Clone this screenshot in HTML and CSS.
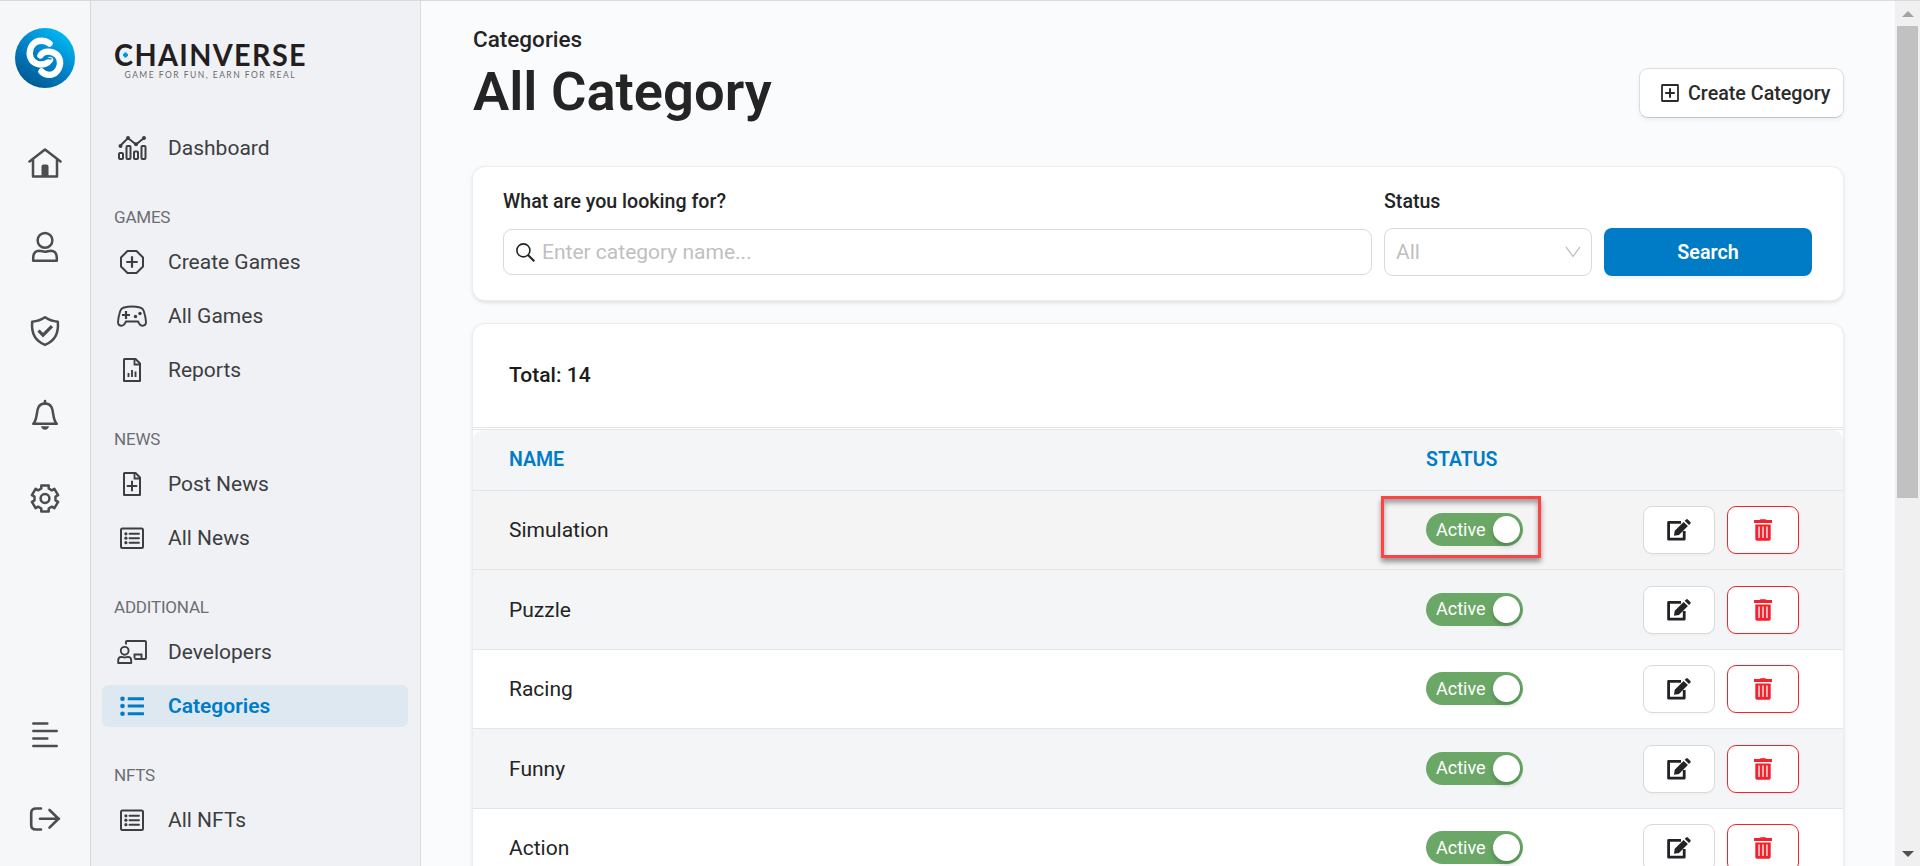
FILE: index.html
```html
<!DOCTYPE html>
<html lang="en">
<head>
<meta charset="utf-8">
<title>All Category</title>
<link rel="stylesheet" href="styles.css">
</head>
<body>
<svg class="sprite" aria-hidden="true">
  <symbol id="i-edit" viewBox="0 0 24 22"><path d="M14 3.4H1.6V20.2H17.2V12" fill="none" stroke="currentColor" stroke-width="2.8" stroke-linejoin="round"/><path d="M7 16.8l.7-5L16.6 2.900l4.300 4.200-8.900 8.900zM17.700 1.800L19.200.400q.800-.700 1.600 0l2.600 2.500q.700.800 0 1.600L22 6z" fill="currentColor"/></symbol>
  <symbol id="i-trash" viewBox="0 0 18 22"><path d="M5.500 1Q6 .2 7 .2h4q1 0 1.500.8H18v3H0V1zM1.300 5.500h15.400V20q0 1.700-1.700 1.700H3Q1.300 21.700 1.300 20zM4.400 7.500v11.500h1.300V7.500zM8.350 7.500v11.500h1.300V7.500zM12.300 7.500v11.500h1.300V7.500z" fill="currentColor" fill-rule="evenodd"/></symbol>
  <symbol id="i-list" viewBox="0 0 30 24"><rect x="4" y="2.500" width="22" height="19.500" rx="1.500" fill="none" stroke="currentColor" stroke-width="2"/><path d="M12.500 7.800h9.500M12.500 12.200h9.500M12.500 16.700h9.500" stroke="currentColor" stroke-width="1.900" stroke-linecap="round"/><g fill="currentColor"><circle cx="8.900" cy="7.800" r="1.600"/><circle cx="8.900" cy="12.200" r="1.600"/><circle cx="8.900" cy="16.700" r="1.600"/></g></symbol>
</svg>
<div class="app">
  <nav class="rail">
    <svg class="rail-logo" viewBox="0 0 60 60">
      <defs><linearGradient id="lg" x1=".85" y1=".1" x2=".25" y2=".95"><stop offset="0" stop-color="#00baf2"/><stop offset=".5" stop-color="#0083c9"/><stop offset="1" stop-color="#005a94"/></linearGradient></defs>
      <circle cx="30" cy="30" r="30" fill="url(#lg)"/>
      <g fill="none" stroke="#fff" stroke-width="6.400" stroke-linecap="round"><path d="M34.500 15.500C28 10.500 19 12.500 16 19.500C13 26.500 15.500 34 22.500 36C27.500 37.500 33 35.500 35 32"/><path d="M25.500 27.500C27.500 24 33 22.500 38 24.500C44.500 27 47 34 43.500 41C40 47.500 32 49 26.500 43.500"/></g>
      <path d="M27.500 32.500C30 31 32 29.500 36.500 31" fill="none" stroke="#0083c9" stroke-width="1.600"/>
    </svg>
    <div class="rail-menu">
      <svg class="rail-icon" viewBox="0 0 34 34"><path d="M1.500 15.500L17 3.500l15.500 12M5 13.500V30.500H29V13.500" fill="none" stroke="currentColor" stroke-width="2.500" stroke-linecap="round" stroke-linejoin="round"/><path d="M13.500 31V20.500q0-2 2-2h3q2 0 2 2V31z" fill="currentColor"/></svg>
      <svg class="rail-icon" viewBox="0 0 34 34"><g fill="none" stroke="currentColor" stroke-width="2.500"><circle cx="17" cy="10.300" r="7.400"/><path d="M5.200 30.700V28q0-7 6-7.200c3 0 3 .9 5.800.9s3-.9 5.800-.9q6 .2 6 7.200v2.700z" stroke-linejoin="round"/></g></svg>
      <svg class="rail-icon" viewBox="0 0 34 34"><path d="M17 3.300c4 2.800 8 4 12.800 4.400C30.800 18 27 27 17 30.900C7 27 3.200 18 4.200 7.700C9 7.300 13 6.100 17 3.300z" fill="none" stroke="currentColor" stroke-width="2.500" stroke-linejoin="round"/><path d="M10.500 16.500l4.500 4.700 9-9" fill="none" stroke="currentColor" stroke-width="3.200"/></svg>
      <svg class="rail-icon" viewBox="0 0 34 34"><path d="M5.200 25.800C11.500 20 5.500 6 17 5.500C28.500 6 22.500 20 28.800 25.800z" fill="none" stroke="currentColor" stroke-width="2.500" stroke-linejoin="round"/><path d="M17 5V3" stroke="currentColor" stroke-width="2.600" stroke-linecap="round"/><path d="M13 28.200h8q-.8 3.300-4 3.600-3.200-.3-4-3.600z" fill="currentColor"/></svg>
      <svg class="rail-icon" viewBox="0 0 34 34"><g transform="translate(17 16.500)" fill="none" stroke="currentColor" stroke-width="2.500" stroke-linejoin="round"><path d="M-3.700-10V-13H3.700V-10L6.800-8.200 9.400-9.700 13.100-3.300 10.500-1.800V1.800L13.100 3.300 9.400 9.700 6.800 8.200 3.700 10V13H-3.700V10L-6.800 8.200-9.400 9.700-13.100 3.300-10.500 1.800V-1.800L-13.100-3.300-9.400-9.700-6.800-8.200z"/><circle r="4.400"/></g></svg>
    </div>
    <div class="rail-menu rail-bottom">
      <svg class="rail-icon" viewBox="0 0 34 34"><path d="M5.300 5.500h14M5.300 13h23.400M5.300 20.500h14M5.300 28h23.400" stroke="currentColor" stroke-width="2.500" stroke-linecap="round"/></svg>
      <svg class="rail-icon" viewBox="0 0 34 34"><path d="M13 6.500H8Q3.200 6.500 3.200 11v12q0 4.500 4.800 4.500h5M12 16.800H31M21.500 8l9 8.800-9 8.800" fill="none" stroke="currentColor" stroke-width="2.600" stroke-linecap="round" stroke-linejoin="round"/></svg>
    </div>
  </nav>

  <aside class="sidebar">
    <svg class="wordmark" viewBox="0 0 194 38">
      <text class="brand" x="0" y="24" textLength="193" lengthAdjust="spacingAndGlyphs">CHAINVERSE</text>
      <path d="M11.500 10.500v5M9 13h5" stroke="#0095dc" stroke-width="2.600"/>
      <text class="tagline" x="10.500" y="36" textLength="170">GAME FOR FUN, EARN FOR REAL</text>
    </svg>
    <div class="groups">
      <div class="group">
        <a class="item"><svg class="icon" viewBox="0 0 30 24"><g fill="none" stroke="currentColor" stroke-width="2"><rect x="2" y="17" width="4" height="6" rx="1"/><rect x="9.500" y="10" width="4" height="13" rx="1"/><rect x="17" y="15.500" width="4" height="7.500" rx="1"/><rect x="24.500" y="10" width="4" height="13" rx="1"/><path d="M3.500 9.500L11 2l8 6.500L27 2"/></g><g fill="currentColor"><circle cx="3.500" cy="10" r="2"/><circle cx="11" cy="2" r="2"/><circle cx="19" cy="8.200" r="2"/><circle cx="27" cy="2" r="2"/></g></svg><span>Dashboard</span></a>
      </div>
      <div class="group">
        <h2 class="label">GAMES</h2>
        <a class="item"><svg class="icon" viewBox="0 0 30 24"><path d="M10.500 1h9L26 7.500v9L19.500 23h-9L4 16.500v-9z" fill="none" stroke="currentColor" stroke-width="2" stroke-linejoin="round"/><path d="M15 6.300v11.400M9.300 12h11.400" stroke="currentColor" stroke-width="2.200"/></svg><span>Create Games</span></a>
        <a class="item"><svg class="icon" viewBox="0 0 30 24"><path d="M7 3.500Q15 1.500 23 3.500q3 .8 3.800 3.500 2 6.500 2.200 11 0 3.700-3.500 3.700-2 0-3-1.700l-1.500-2.500H9L7.500 20q-1 1.700-3 1.700Q1 21.700 1 18 1.200 13.500 3.200 7 4 4.300 7 3.500z" fill="none" stroke="currentColor" stroke-width="1.900"/><path d="M9 7v8M5 11h8" stroke="currentColor" stroke-width="2.200"/><circle cx="23" cy="9.500" r="1.700" fill="currentColor"/><circle cx="18.500" cy="12.500" r="1.700" fill="currentColor"/></svg><span>All Games</span></a>
        <a class="item"><svg class="icon" viewBox="0 0 30 24"><path d="M7 1.500q0-.5.500-.5H18.500L23 5.500V23H7z" fill="none" stroke="currentColor" stroke-width="2" stroke-linejoin="round"/><path d="M17.500 1v5.500H23" fill="none" stroke="currentColor" stroke-width="1.800"/><path d="M11.500 19v-4M15 19v-7M18.500 19v-5.500" stroke="currentColor" stroke-width="1.900"/></svg><span>Reports</span></a>
      </div>
      <div class="group">
        <h2 class="label">NEWS</h2>
        <a class="item"><svg class="icon" viewBox="0 0 30 24"><path d="M7 1.500q0-.5.500-.5H18.500L23 5.500V23H7z" fill="none" stroke="currentColor" stroke-width="2" stroke-linejoin="round"/><path d="M17.500 1v5.500H23" fill="none" stroke="currentColor" stroke-width="1.800"/><path d="M15 8.800v10.400M9.800 14h10.400" stroke="currentColor" stroke-width="2"/></svg><span>Post News</span></a>
        <a class="item"><svg class="icon"><use href="#i-list"/></svg><span>All News</span></a>
      </div>
      <div class="group">
        <h2 class="label">ADDITIONAL</h2>
        <a class="item"><svg class="icon" viewBox="0 0 30 24"><g fill="none" stroke="currentColor" stroke-width="1.900"><path d="M9 4.500V2q0-1 1-1H28q1 0 1 1V18q0 1-1 1H17.500M17.500 18.500v-4h7v4"/><circle cx="7.700" cy="10.800" r="3.900"/><path d="M1.200 23v-2.500q0-3.500 3-3.600c1.500 0 2 .6 3.500.6s2-.6 3.500-.6q3 .1 3 3.600V23z" stroke-linejoin="round"/></g></svg><span>Developers</span></a>
        <a class="item active"><svg class="icon" viewBox="0 0 30 24"><path d="M12.200 4.700H25.500M12.200 12H25.500M12.200 19.700H25.500" stroke="currentColor" stroke-width="2.900" stroke-linecap="square"/><g fill="currentColor"><circle cx="5.500" cy="4.700" r="2.300"/><circle cx="5.500" cy="12" r="2.300"/><circle cx="5.500" cy="19.700" r="2.300"/></g></svg><span>Categories</span></a>
      </div>
      <div class="group">
        <h2 class="label">NFTS</h2>
        <a class="item"><svg class="icon"><use href="#i-list"/></svg><span>All NFTs</span></a>
      </div>
    </div>
  </aside>

  <main class="main">
    <header class="head">
      <div>
        <div class="crumb">Categories</div>
        <h1 class="title">All Category</h1>
      </div>
      <button class="create"><svg class="plus" viewBox="0 0 18 18"><rect x="1" y="1" width="16" height="16" rx=".5" fill="none" stroke="currentColor" stroke-width="1.800"/><path d="M9 4.200v9.600M4.200 9h9.600" stroke="currentColor" stroke-width="2"/></svg><span>Create Category</span></button>
    </header>

    <section class="card filter">
      <div class="field wide">
        <div class="field-label">What are you looking for?</div>
        <div class="input"><svg class="lens" viewBox="0 0 19 19"><circle cx="7.400" cy="7.400" r="6.500" fill="none" stroke="currentColor" stroke-width="1.600"/><path d="M12 12l6.300 6.300" stroke="currentColor" stroke-width="2"/></svg><span>Enter category name...</span></div>
      </div>
      <div class="field">
        <div class="field-label">Status</div>
        <div class="select"><span>All</span><svg class="chev" viewBox="0 0 16 12"><path d="M1 .8l7 9.700 7-9.700" fill="none" stroke="currentColor" stroke-width="1.300"/></svg></div>
      </div>
      <button class="search">Search</button>
    </section>

    <section class="card list">
      <div class="total">Total: 14</div>
      <div class="row thead"><span>NAME</span><span>STATUS</span></div>
      <div class="row hover"><span>Simulation</span><div class="status marked"><div class="toggle">Active<i></i></div></div><div class="actions"><button class="btn"><svg class="edit"><use href="#i-edit"/></svg></button><button class="btn danger"><svg class="trash"><use href="#i-trash"/></svg></button></div></div>
      <div class="row tint"><span>Puzzle</span><div class="status"><div class="toggle">Active<i></i></div></div><div class="actions"><button class="btn"><svg class="edit"><use href="#i-edit"/></svg></button><button class="btn danger"><svg class="trash"><use href="#i-trash"/></svg></button></div></div>
      <div class="row"><span>Racing</span><div class="status"><div class="toggle">Active<i></i></div></div><div class="actions"><button class="btn"><svg class="edit"><use href="#i-edit"/></svg></button><button class="btn danger"><svg class="trash"><use href="#i-trash"/></svg></button></div></div>
      <div class="row tint"><span>Funny</span><div class="status"><div class="toggle">Active<i></i></div></div><div class="actions"><button class="btn"><svg class="edit"><use href="#i-edit"/></svg></button><button class="btn danger"><svg class="trash"><use href="#i-trash"/></svg></button></div></div>
      <div class="row"><span>Action</span><div class="status"><div class="toggle">Active<i></i></div></div><div class="actions"><button class="btn"><svg class="edit"><use href="#i-edit"/></svg></button><button class="btn danger"><svg class="trash"><use href="#i-trash"/></svg></button></div></div>
    </section>
  </main>

  <div class="scrollbar">
    <svg class="arrow off" viewBox="0 0 12 6"><path d="M0 6L6 0l6 6z" fill="currentColor"/></svg>
    <div class="thumb"></div>
    <svg class="arrow" viewBox="0 0 12 6"><path d="M0 0l6 6 6-6z" fill="currentColor"/></svg>
  </div>
</div>
</body>
</html>
```

FILE: styles.css
```css
*, *::after { box-sizing: border-box; }
body { margin: 0; font-family: Roboto, sans-serif; color: #242424; overflow: hidden; }
button { font-family: inherit; padding: 0; margin: 0; }
.sprite { position: absolute; width: 0; height: 0; }
.app { display: flex; height: 866px; border-top: 1px solid #d9dade; background: #fafbfd; overflow: hidden; }

/* icon rail */
.rail { width: 91px; flex: none; border-right: 1px solid #d6d8dc; background: #f6f7f9; color: #4b4d50; display: flex; flex-direction: column; align-items: center; padding: 27px 0 30px; }
.rail-logo { width: 60px; height: 60px; flex: none; }
.rail-menu { display: flex; flex-direction: column; gap: 50px; margin-top: 58px; }
.rail-bottom { margin-top: auto; }
.rail-icon { width: 34px; height: 34px; display: block; }

/* menu */
.sidebar { width: 330px; flex: none; background: #f0f1f5; border-right: 1px solid #dadbdf; padding: 41px 12px 0 11px; color: #3c3e40; }
.wordmark { display: block; width: 194px; height: 38px; margin-left: 12px; overflow: visible; }
.brand { font: 700 31px Lato, sans-serif; letter-spacing: 1.5px; fill: #231f20; }
.tagline { font: 400 8.500px Lato, sans-serif; fill: #6a6b6e; }
.groups { display: flex; flex-direction: column; gap: 36px; margin-top: 47px; }
.group { display: flex; flex-direction: column; gap: 12px; }
.label { margin: 0 0 0 12px; height: 24px; line-height: 24px; font-size: 17px; font-weight: 400; color: #6c6e71; letter-spacing: -.2px; }
.item { display: flex; align-items: center; gap: 21px; height: 42px; padding-left: 15px; border-radius: 6px; font-size: 21px; white-space: nowrap; }
.icon { width: 30px; height: 24px; flex: none; }
.active { background: #dde8f1; color: #007cc7; font-weight: 600; }

/* page */
.main { width: 1474px; flex: none; padding: 20px 52px 0; }
.head { display: flex; justify-content: space-between; height: 146px; }
.crumb { font-size: 22.500px; font-weight: 500; line-height: 36px; }
.title { margin: 3px 0 0; font-size: 54.300px; font-weight: 600; line-height: 64px; }
.create { width: 205px; height: 50px; margin: 47px -1px 0 0; border: 1px solid #dcdde2; border-bottom-color: #c4c6cc; border-radius: 9px; background: #fff; box-shadow: 0 2px 4px rgba(0,0,0,.06); display: flex; align-items: center; padding-left: 21px; gap: 9px; font-size: 19.700px; font-weight: 500; color: #2b2b2b; white-space: nowrap; }
.plus { width: 18px; height: 18px; flex: none; }
.card { background: #fff; border-radius: 12px; box-shadow: 0 0 0 1px #ecedef, 0 2px 5px rgba(0,0,0,.14); }
.filter { height: 133px; padding: 19px 31px 24px 30px; display: flex; gap: 12px; align-items: flex-end; }
.field { width: 208px; }
.wide { width: auto; flex: 1; padding-bottom: 1px; }
.field-label { font-size: 19.600px; font-weight: 500; line-height: 30px; margin-bottom: 11px; }
.wide .field-label { margin-bottom: 12px; }
.input, .select { height: 46px; border: 1px solid #d9d9d9; border-radius: 9px; display: flex; align-items: center; font-size: 21px; color: #bfbfbf; padding: 0 12px; }
.select { height: 48px; justify-content: space-between; padding: 0 10px 0 11px; }
.lens { width: 19px; height: 19px; color: #222; margin-right: 7px; }
.chev { width: 16px; height: 12px; }
.search { width: 208px; height: 48px; border: 0; border-radius: 8px; background: #007cc7; color: #fff; font-size: 19.700px; font-weight: 600; box-shadow: 0 3px 0 rgba(0,0,0,.04); }

/* table */
.list { margin-top: 24px; height: 560px; }
.total { height: 104px; line-height: 103px; padding-left: 36px; font-size: 21px; font-weight: 500; border-bottom: 1px solid #e6e7e8; box-shadow: 0 1px 0 #fff, 0 2px 0 #e6e7e8; color: #1b1b1b; }
.row { display: grid; grid-template-columns: 917px 217px 1fr; align-items: center; height: 79px; padding-left: 36px; border-bottom: 1px solid #e3e5e7; font-size: 21px; }
.row.tint { height: 80px; background: #f4f5f7; }
.row.hover { background: #f4f4f4; }
.row.thead { height: 61px; margin-top: 2px; padding-bottom: 1px; background: #f4f5f7; border-radius: 10px 10px 0 0; font-size: 19.500px; font-weight: 600; color: #007cc7; }
.status { position: relative; width: 97px; margin-bottom: 1px; }
.toggle { width: 97px; height: 33px; border-radius: 17px; background: #6ba868; color: #fff; font-size: 18px; line-height: 32px; padding: 0 3px 0 10px; display: flex; justify-content: space-between; align-items: center; }
.toggle i { width: 27px; height: 27px; border-radius: 50%; background: #fff; box-shadow: 0 3px 5px rgba(0,35,11,.25); }
.marked::after { content: ""; position: absolute; left: -45px; top: -17px; width: 160px; height: 62px; border: 3px solid #ff4242; box-shadow: 0 4px 5px rgba(0,0,0,.4), inset 0 4px 5px rgba(0,0,0,.35); }
.actions { display: flex; gap: 12px; }
.btn { width: 72px; height: 48px; border: 1px solid #d9d9d9; border-radius: 9px; background: #fff; box-shadow: 0 2px 0 rgba(0,0,0,.02); display: flex; align-items: center; justify-content: center; color: #222327; }
.danger { border-color: #f5222d; color: #f5222d; }
.edit { width: 24px; height: 22px; }
.trash { width: 18px; height: 22px; }

/* scrollbar */
.scrollbar { width: 25px; flex: none; background: #f0f0f0; display: flex; flex-direction: column; align-items: center; padding: 10px 0 9px; }
.arrow { width: 12px; height: 6px; color: #505050; flex: none; margin-top: auto; }
.arrow.off { color: #a3a3a3; margin: 0 0 9px; }
.thumb { width: 21px; height: 472px; background: #c1c1c1; }
```
